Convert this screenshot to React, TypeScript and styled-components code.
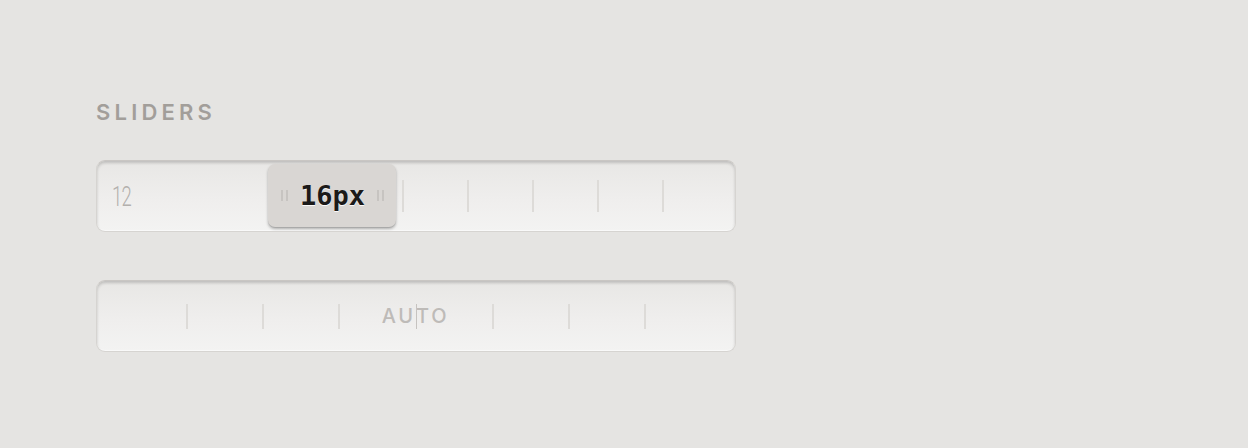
import React from 'react';
import styled, { createGlobalStyle } from 'styled-components';

const GlobalStyle = createGlobalStyle`
  html, body {
    margin: 0;
    padding: 0;
    background: #e5e4e2;
  }
  body {
    font-family: Inter, "Liberation Sans", sans-serif;
  }
`;

const Page = styled.div`
  width: 1248px;
  height: 448px;
  box-sizing: border-box;
  padding: 98px 0 0 96px;
  display: flex;
  flex-direction: column;
`;

const Heading = styled.h2`
  margin: 0 0 34px;
  font-size: 22px;
  line-height: 28px;
  font-weight: 600;
  letter-spacing: 4.2px;
  color: #a29e9a;
`;

const Tracks = styled.div`
  display: flex;
  flex-direction: column;
  gap: 48px;
`;

const Track = styled.div`
  position: relative;
  width: 640px;
  height: 72px;
  box-sizing: border-box;
  border: 1px solid #d6d4d1;
  border-top-color: #c9c6c3;
  border-radius: 9px;
  background: linear-gradient(180deg, #e8e7e5 0%, #efeeed 55%, #f3f3f2 100%);
  box-shadow: inset 0 2px 3px rgba(0, 0, 0, 0.18), inset 0 -1px 0 rgba(255, 255, 255, 0.6);
  display: flex;
  align-items: center;
  overflow: hidden;
`;

// tick row sits behind the label/thumb; $start pins the first tick
const Ticks = styled.div<{ $gap: number; $start: number }>`
  position: absolute;
  inset: 0;
  display: flex;
  align-items: center;
  padding-left: ${(p) => p.$start}px;
  gap: ${(p) => p.$gap}px;
  pointer-events: none;
`;

const Tick = styled.span<{ $height: number; $center?: boolean }>`
  display: block;
  width: ${(p) => (p.$center ? 1 : 2)}px;
  height: ${(p) => p.$height}px;
  margin: ${(p) => (p.$center ? '0 1px 0 2px' : '0')};
  background: ${(p) => (p.$center ? '#c6c3c0' : '#dddbd8')};
  position: relative;
  z-index: ${(p) => (p.$center ? 2 : 0)};
`;

const MinLabel = styled.span`
  position: relative;
  margin-left: 15px;
  display: inline-block;
  font-family: Roboto, "Liberation Sans", sans-serif;
  font-weight: 300;
  font-size: 28px;
  letter-spacing: -1px;
  color: #b3b0ad;
  transform: scaleX(0.66);
  transform-origin: left center;
`;

const Thumb = styled.div`
  position: absolute;
  left: 171px;
  top: 3px;
  width: 128px;
  height: 63px;
  box-sizing: border-box;
  border-radius: 7px;
  background: #d9d6d3;
  box-shadow: 0 2px 3px rgba(0, 0, 0, 0.28), 0 1px 0 rgba(0, 0, 0, 0.08);
  display: flex;
  align-items: center;
  justify-content: space-between;
  padding: 0 12px 0 13px;
  z-index: 3;
`;

const Grip = styled.div`
  display: flex;
  gap: 3px;

  i {
    display: block;
    width: 2px;
    height: 11px;
    background: #c7c4c1;
  }
`;

const ThumbValue = styled.span`
  font-family: "DejaVu Sans Mono", "Liberation Mono", monospace;
  font-weight: 700;
  font-size: 27px;
  color: #1c1a19;
  text-shadow: 0 1px 0 rgba(255, 255, 255, 0.9);
`;

const AutoLabel = styled.span`
  position: relative;
  z-index: 1;
  margin: 0 auto;
  padding-right: 1px;
  font-size: 20px;
  font-weight: 500;
  letter-spacing: 2.8px;
  color: #bebbb8;
`;

const SizeSlider = () => (
  <Track>
    <MinLabel>12</MinLabel>
    <Ticks $gap={63} $start={305}>
      {Array.from({ length: 5 }, (_, i) => (
        <Tick key={i} $height={32} />
      ))}
    </Ticks>
    <Thumb>
      <Grip>
        <i />
        <i />
      </Grip>
      <ThumbValue>16px</ThumbValue>
      <Grip>
        <i />
        <i />
      </Grip>
    </Thumb>
  </Track>
);

const AutoSlider = () => (
  <Track>
    <Ticks $gap={74} $start={89}>
      {Array.from({ length: 7 }, (_, i) => (
        <Tick key={i} $height={25} $center={i === 3} />
      ))}
    </Ticks>
    <AutoLabel>AUTO</AutoLabel>
  </Track>
);

export default function App() {
  return (
    <>
      <GlobalStyle />
      <Page>
        <Heading>SLIDERS</Heading>
        <Tracks>
          <SizeSlider />
          <AutoSlider />
        </Tracks>
      </Page>
    </>
  );
}
